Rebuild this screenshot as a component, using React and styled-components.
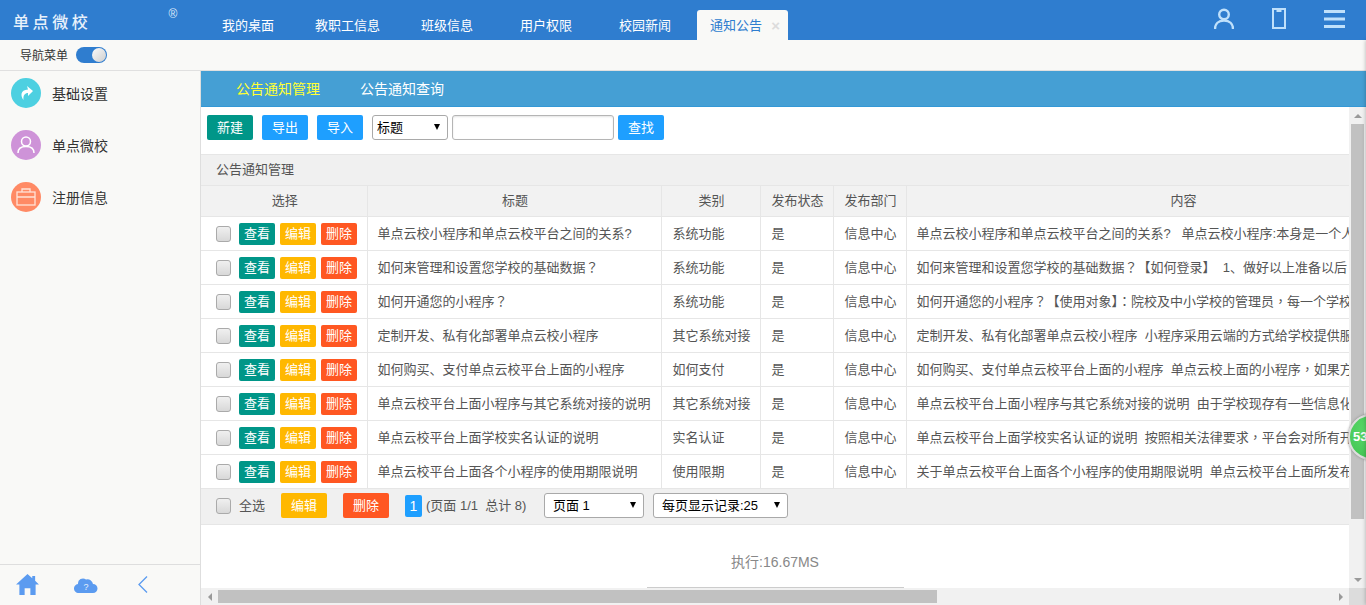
import React from "react";
import styled, { createGlobalStyle } from "styled-components";

const selectArrow = `url("data:image/svg+xml,%3Csvg xmlns='http://www.w3.org/2000/svg' width='6' height='6'%3E%3Cpolygon points='0,0 6,0 3,6' fill='%23000'/%3E%3C/svg%3E")`;

const Global = createGlobalStyle`
  html, body { margin: 0; height: 100%; overflow: hidden; background: #f9f9f7; }
  body, button, select, input { font-family: "Liberation Sans", "Noto Sans CJK SC", sans-serif; }
  #root { height: 605px; }
  * { box-sizing: border-box; }
`;

const Page = styled.div`
  position: relative;
  width: 1366px;
  height: 605px;
  display: flex;
  flex-direction: column;
  overflow: hidden;
`;

const Header = styled.header`
  height: 40px;
  flex: none;
  background: #2f7dcf;
  display: flex;
  color: #fff;
`;
const Brand = styled.div`
  width: 209px;
  flex: none;
  padding: 12px 0 0 13px;
  font-size: 16px;
  line-height: 22px;
  font-weight: 500;
  letter-spacing: 3.6px;
  color: #e8f1fb;
  display: flex;
`;
const Reg = styled.sup`
  font-size: 12px;
  line-height: 12px;
  letter-spacing: 0;
  margin: -4px 0 0 77px;
  color: #dfeafa;
`;
const Tabs = styled.nav`
  display: flex;
  align-items: flex-end;
  flex: 1;
`;
const Tab = styled.div`
  height: 30px;
  padding: 0 ${(p) => (p.$active ? "26px" : "13px")} 0 13px;
  margin-left: ${(p) => p.$gap}px;
  font-size: 13px;
  line-height: 31px;
  position: relative;
  color: ${(p) => (p.$active ? "#2f7dcf" : "#fff")};
  background: ${(p) => (p.$active ? "#f9f9f7" : "transparent")};
  border-radius: 3px 3px 0 0;
`;
const Close = styled.span`
  position: absolute;
  right: 8px;
  top: 0;
  font-size: 15px;
  font-weight: 700;
  color: #dcdcdc;
`;
const HeadIcons = styled.div`
  display: flex;
  align-items: center;
  padding: 0 21px 3px 0;
  gap: 38px;
`;

const SubBar = styled.div`
  height: 31px;
  flex: none;
  background: #f9f9f7;
  border-bottom: 1px solid #e0e0e0;
  display: flex;
  align-items: center;
  padding: 0 0 1px 20px;
  font-size: 12px;
  color: #333;
  gap: 8px;
`;
const Switch = styled.div`
  width: 31px;
  height: 16px;
  border-radius: 8px;
  background: #2f7dcf;
  position: relative;
  &::after {
    content: "";
    position: absolute;
    right: 1px;
    top: 1px;
    width: 14px;
    height: 14px;
    border-radius: 50%;
    background: linear-gradient(135deg, #fafafa, #cfcfcf);
  }
`;

const Body = styled.div`
  flex: 1;
  min-height: 0;
  display: flex;
`;
const Side = styled.aside`
  width: 201px;
  flex: none;
  background: #f9f9f7;
  border-right: 1px solid #dedede;
  display: flex;
  flex-direction: column;
`;
const SideList = styled.div`
  flex: 1;
  padding-top: 7px;
  display: flex;
  flex-direction: column;
  gap: 22px;
`;
const SideItem = styled.div`
  display: flex;
  align-items: center;
  height: 30px;
  padding-left: 11px;
  gap: 11px;
  font-size: 14px;
  color: #333;
`;
const Dot = styled.span`
  width: 30px;
  height: 30px;
  border-radius: 50%;
  background: ${(p) => p.$c};
  display: flex;
  align-items: center;
  justify-content: center;
  flex: none;
`;
const SideFoot = styled.div`
  height: 41px;
  flex: none;
  border-top: 1px solid #dedede;
  display: flex;
  align-items: center;
  padding: 0 0 1px 16px;
`;
const FootSlot = styled.span`
  display: flex;
  width: ${(p) => p.$w}px;
  flex: none;
`;

const Main = styled.main`
  flex: 1;
  min-width: 0;
  display: flex;
  flex-direction: column;
`;
const SubTabs = styled.div`
  height: 36px;
  flex: none;
  background: #459fd4;
  border-bottom: 1px solid #3398d6;
  display: flex;
  align-items: center;
  padding: 0 0 1px 35px;
  gap: 40px;
  font-size: 14px;
  color: #fff;
`;
const SubTab = styled.span`
  color: ${(p) => (p.$active ? "#ffff33" : "#fff")};
`;
const ScrollArea = styled.div`
  flex: 1;
  min-height: 0;
  display: grid;
  grid-template-columns: 1fr 17px;
  grid-template-rows: 1fr 17px;
  background: #fff;
`;
const Viewport = styled.div`
  overflow: hidden;
  min-width: 0;
  min-height: 0;
`;
const VBar = styled.div`
  background: #f1f1f1;
  display: flex;
  flex-direction: column;
  align-items: center;
`;
const HBar = styled.div`
  background: #f1f1f1;
  display: flex;
  align-items: center;
`;
const ArrowBox = styled.span`
  width: 17px;
  height: 17px;
  flex: none;
  display: flex;
  align-items: center;
  justify-content: center;
  margin-top: ${(p) => p.$mt || 0}px;
  margin-left: ${(p) => p.$ml || 0}px;
`;
const VThumb = styled.div`
  width: 13px;
  height: 395px;
  background: #c1c1c1;
`;
const HThumb = styled.div`
  width: 719px;
  height: 13px;
  background: #c1c1c1;
`;
const Corner = styled.div`
  background: #dcdcdc;
`;
const Content = styled.div`
  width: 1779px;
  height: 544px;
`;
const Toolbar = styled.div`
  height: 47px;
  padding: 8px 0 0 6px;
  display: flex;
  align-items: flex-start;
  width: 1148px;
`;
const Btn = styled.button`
  width: ${(p) => p.$w || 46}px;
  height: ${(p) => p.$h || 25}px;
  margin-left: ${(p) => p.$ml || 0}px;
  padding: 0 0 2px;
  border: 0;
  border-radius: 2px;
  font-size: 13px;
  color: #fff;
  background: ${(p) => p.$bg};
  flex: none;
`;
const Sel = styled.select`
  appearance: none;
  width: ${(p) => p.$w}px;
  height: 25px;
  margin-left: ${(p) => p.$ml}px;
  padding: 0 0 0 ${(p) => p.$pl}px;
  border: 1px solid #a9a9a9;
  border-radius: 3px;
  background: #fff ${selectArrow} no-repeat right 7px top 8px;
  font-size: 13px;
  color: #000;
  flex: none;
`;
const Search = styled.input`
  width: 162px;
  height: 25px;
  margin-left: 4px;
  border: 1px solid #b5b5b5;
  border-radius: 3px;
  box-shadow: inset 0 1px 2px #e4e4e4;
  flex: none;
  margin-right: 4px;
`;
const PanelHead = styled.div`
  height: 31px;
  padding-left: 15px;
  background: #f0f0f0;
  border-top: 1px solid #e6e6e6;
  font-size: 13px;
  line-height: 30px;
  color: #555;
`;
const Table = styled.table`
  table-layout: fixed;
  border-collapse: collapse;
  width: 1779px;
  font-size: 13px;
  color: #555;
`;
const Th = styled.th`
  height: 31px;
  padding: 0 0 4px 2px;
  background: #f2f2f2;
  font-weight: 400;
  text-align: center;
  border: 1px solid #e6e6e6;
  border-left: ${(p) => (p.$first ? 0 : undefined)};
`;
const Td = styled.td`
  height: 34px;
  padding: 0 0 2px ${(p) => (p.$mid ? 11 : 10)}px;
  background: #fff;
  white-space: pre;
  overflow: hidden;
  border: 1px solid #e6e6e6;
  border-left: ${(p) => (p.$first ? 0 : undefined)};
`;
const Actions = styled.div`
  display: flex;
  align-items: center;
  padding: 2px 0 0 5px;
  gap: 5px;
`;
const Check = styled.span`
  width: 15px;
  height: 16px;
  border: 1px solid #aaa;
  border-radius: 3px;
  background: linear-gradient(#f0f0f0, #d8d8d8);
  margin-right: 3px;
  flex: none;
`;
const Foot = styled.div`
  height: 36px;
  background: #f0f0f0;
  border-bottom: 1px solid #e6e6e6;
  display: flex;
  align-items: center;
  padding: 0 0 2px 15px;
  font-size: 13px;
  color: #555;
`;
const AllLabel = styled.span`
  margin: 0 0 2px 5px;
  width: 42px;
  flex: none;
`;
const PageNo = styled.span`
  width: 17px;
  height: 22px;
  margin-left: 16px;
  border-radius: 2px;
  background: #1e9fff;
  color: #fff;
  text-align: center;
  font-size: 14px;
  line-height: 22px;
  flex: none;
`;
const PageInfo = styled.span`
  margin: 0 0 2px 4px;
  width: 118px;
  flex: none;
  white-space: pre;
`;
const Exec = styled.div`
  width: 1148px;
  padding-top: 28px;
  text-align: center;
  font-size: 14px;
  line-height: 18px;
  color: #888;
`;
const ExecBox = styled.div`
  width: 257px;
  height: 50px;
  margin: 16px auto 0;
  border: 1px solid #ccc;
`;
const Punct = styled.span`
  font-family: "Noto Sans CJK TC", sans-serif;
`;
const Badge = styled.div`
  position: absolute;
  left: 1348px;
  top: 414px;
  width: 46px;
  height: 46px;
  border-radius: 50%;
  background: radial-gradient(circle at 50% 35%, #5fdc6f, #3fc24f);
  border: 2px solid #ddd;
  box-shadow: 0 0 3px #888;
  color: #fff;
  font: 700 13px/42px "Liberation Sans", sans-serif;
  padding-left: 3px;
`;
const EdgeShadow = styled.div`
  position: absolute;
  left: 1366px;
  top: 40px;
  bottom: 0;
  width: 4px;
  box-shadow: 0 0 4px rgba(0, 0, 0, 0.3);
`;

const COLS = [166, 294, 99, 73, 73, 553, 521];

const ROWS = [
  ["单点云校小程序和单点云校平台之间的关系?", "系统功能", "单点云校小程序和单点云校平台之间的关系?   单点云校小程序:本身是一个人"],
  ["如何来管理和设置您学校的基础数据？", "系统功能", "如何来管理和设置您学校的基础数据？【如何登录】  1、做好以上准备以后"],
  ["如何开通您的小程序？", "系统功能", "如何开通您的小程序？【使用对象】：院校及中小学校的管理员，每一个学校"],
  ["定制开发、私有化部署单点云校小程序", "其它系统对接", "定制开发、私有化部署单点云校小程序  小程序采用云端的方式给学校提供服务"],
  ["如何购买、支付单点云校平台上面的小程序", "如何支付", "如何购买、支付单点云校平台上面的小程序  单点云校上面的小程序，如果方"],
  ["单点云校平台上面小程序与其它系统对接的说明", "其它系统对接", "单点云校平台上面小程序与其它系统对接的说明  由于学校现存有一些信息化"],
  ["单点云校平台上面学校实名认证的说明", "实名认证", "单点云校平台上面学校实名认证的说明  按照相关法律要求，平台会对所有开"],
  ["单点云校平台上面各个小程序的使用期限说明", "使用限期", "关于单点云校平台上面各个小程序的使用期限说明  单点云校平台上面所发布"],
];

const withPunct = (s) =>
  s.split(/([？，：])/).map((part, i) => (i % 2 ? <Punct key={i}>{part}</Punct> : part));

const IconStroke = { fill: "none", stroke: "#bfe0fb", strokeWidth: 2 };

const Tri = ({ pts }) => (
  <svg width="8" height="8" viewBox="0 0 8 8" fill="#9a9a9a">
    <polygon points={pts} />
  </svg>
);

export default function App() {
  return (
    <Page>
      <Global />
      <Header>
        <Brand>单点微校<Reg>®</Reg></Brand>
        <Tabs>
          <Tab $gap={0}>我的桌面</Tab>
          <Tab $gap={15}>教职工信息</Tab>
          <Tab $gap={15}>班级信息</Tab>
          <Tab $gap={21}>用户权限</Tab>
          <Tab $gap={21}>校园新闻</Tab>
          <Tab $gap={13} $active>通知公告<Close>×</Close></Tab>
        </Tabs>
        <HeadIcons>
          <svg width="20" height="21" viewBox="0 0 20 21" {...IconStroke} strokeWidth="2.4">
            <circle cx="10" cy="6.500" r="4.800" />
            <path d="M1 21c0-5 3.500-8.500 9-8.500s9 3.500 9 8.500" />
          </svg>
          <svg width="14" height="21" viewBox="0 0 14 21" {...IconStroke}>
            <rect x="1" y="1" width="12" height="19" />
            <path d="M4.500 3h5" />
          </svg>
          <svg width="21" height="18" viewBox="0 0 21 18" fill="#bfe0fb">
            <rect y="0" width="21" height="3" />
            <rect y="7.500" width="21" height="3" />
            <rect y="15" width="21" height="3" />
          </svg>
        </HeadIcons>
      </Header>
      <SubBar>
        导航菜单
        <Switch />
      </SubBar>
      <Body>
        <Side>
          <SideList>
            <SideItem>
              <Dot $c="#4dd0e1">
                <svg width="16" height="16" viewBox="0 0 16 16" fill="#fff">
                  <path d="M9 1l6 5-5 5V8C7 8 5 10 5.500 15 2.500 11 2 5 10 4.500z" />
                </svg>
              </Dot>
              基础设置
            </SideItem>
            <SideItem>
              <Dot $c="#ce93d8">
                <svg width="20" height="20" viewBox="0 0 20 20" fill="none" stroke="#fff" strokeWidth="1.500">
                  <circle cx="10" cy="6.500" r="4.500" />
                  <path d="M2 18c0-4.500 3.500-6.500 8-6.500s8 2 8 6.500" />
                </svg>
              </Dot>
              单点微校
            </SideItem>
            <SideItem>
              <Dot $c="#ff8a65">
                <svg width="20" height="18" viewBox="0 0 20 18" fill="none" stroke="#ffe3d8" strokeWidth="1.300">
                  <rect x="1" y="4" width="18" height="13" />
                  <path d="M6 4V1h8v3M1 9h18" />
                </svg>
              </Dot>
              注册信息
            </SideItem>
          </SideList>
          <SideFoot>
            <FootSlot $w={58}>
              <svg width="23" height="21" viewBox="0 0 24 22" fill="#5b9bf0">
                <path d="M12 0l5 4.500V2h3v5.200l4 3.800h-3.500v11H15v-7H9v7H3.500V11H0z" />
              </svg>
            </FootSlot>
            <FootSlot $w={64}>
              <svg width="24" height="16" viewBox="0 0 24 16">
                <path d="M5 16a4.500 4.500 0 0 1-1-9 5 5 0 0 1 8-4.500A5.500 5.500 0 0 1 19 7a4.500 4.500 0 0 1 0 9z" fill="#5b9bf0" />
                <text x="12" y="13" fontSize="9" fill="#e6effc" textAnchor="middle" fontFamily="Liberation Sans">?</text>
              </svg>
            </FootSlot>
            <FootSlot $w={10}>
              <svg width="10" height="17" viewBox="0 0 10 17" fill="none" stroke="#5b9bf0" strokeWidth="1.300">
                <path d="M9 .5L1 8.500l8 8" />
              </svg>
            </FootSlot>
          </SideFoot>
        </Side>
        <Main>
          <SubTabs>
            <SubTab $active>公告通知管理</SubTab>
            <SubTab>公告通知查询</SubTab>
          </SubTabs>
          <ScrollArea>
            <Viewport>
              <Content>
                <Toolbar>
                  <Btn $bg="#009688">新建</Btn>
                  <Btn $bg="#1e9fff" $ml={9}>导出</Btn>
                  <Btn $bg="#1e9fff" $ml={9}>导入</Btn>
                  <Sel $w={76} $ml={9} $pl={4} defaultValue="标题"><option>标题</option></Sel>
                  <Search />
                  <Btn $bg="#1e9fff">查找</Btn>
                </Toolbar>
                <PanelHead>公告通知管理</PanelHead>
                <Table>
                  <colgroup>
                    {COLS.map((w, i) => <col key={i} style={{ width: w }} />)}
                  </colgroup>
                  <thead>
                    <tr>
                      <Th $first>选择</Th>
                      <Th>标题</Th>
                      <Th>类别</Th>
                      <Th>发布状态</Th>
                      <Th>发布部门</Th>
                      <Th>内容</Th>
                      <Th />
                    </tr>
                  </thead>
                  <tbody>
                    {ROWS.map((r) => (
                      <tr key={r[0]}>
                        <Td $first>
                          <Actions>
                            <Check />
                            <Btn $w={36} $h={22} $bg="#009688">查看</Btn>
                            <Btn $w={36} $h={22} $bg="#ffb800">编辑</Btn>
                            <Btn $w={36} $h={22} $bg="#ff5722">删除</Btn>
                          </Actions>
                        </Td>
                        <Td>{withPunct(r[0])}</Td>
                        <Td $mid>{r[1]}</Td>
                        <Td $mid>是</Td>
                        <Td $mid>信息中心</Td>
                        <Td>{withPunct(r[2])}</Td>
                        <Td />
                      </tr>
                    ))}
                  </tbody>
                </Table>
                <Foot>
                  <Check />
                  <AllLabel>全选</AllLabel>
                  <Btn $bg="#ffb800">编辑</Btn>
                  <Btn $bg="#ff5722" $ml={16}>删除</Btn>
                  <PageNo>1</PageNo>
                  <PageInfo>{"(页面 1/1  总计 8)"}</PageInfo>
                  <Sel $w={100} $ml={0} $pl={8} defaultValue="页面 1"><option>页面 1</option></Sel>
                  <Sel $w={135} $ml={9} $pl={8} defaultValue="每页显示记录:25"><option>每页显示记录:25</option></Sel>
                </Foot>
                <Exec>
                  执行:16.67MS
                  <ExecBox />
                </Exec>
              </Content>
            </Viewport>
            <VBar>
              <ArrowBox><Tri pts="0,6 8,6 4,2" /></ArrowBox>
              <VThumb />
              <ArrowBox $mt={52}><Tri pts="0,2 8,2 4,6" /></ArrowBox>
            </VBar>
            <HBar>
              <ArrowBox><Tri pts="6,0 6,8 2,4" /></ArrowBox>
              <HThumb />
              <ArrowBox $ml={395}><Tri pts="2,0 2,8 6,4" /></ArrowBox>
            </HBar>
            <Corner />
          </ScrollArea>
        </Main>
      </Body>
      <Badge>53</Badge>
      <EdgeShadow />
    </Page>
  );
}
